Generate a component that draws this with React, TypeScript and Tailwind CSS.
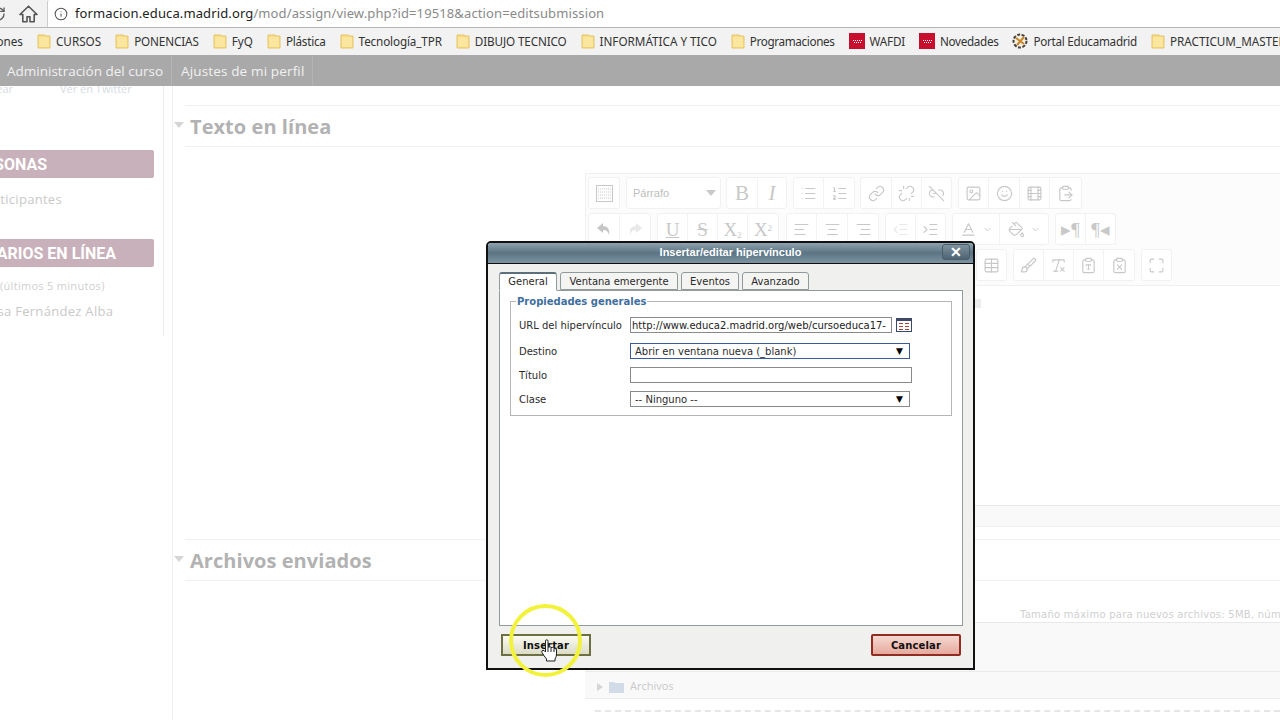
import React from 'react';
import {
  Info, RotateCw, List, ListOrdered, Link, Unlink, Link2Off, Image, Smile, Film, ClipboardPaste,
  AlignLeft, AlignCenter, AlignRight, Outdent, Indent, Baseline, PaintBucket,
  Table, Brush, RemoveFormatting, ClipboardType, ClipboardX, Maximize, ChevronDown,
} from 'lucide-react';

const FolderIcon = () => (
  <svg width="14" height="15" viewBox="0 0 14 15" className="shrink-0">
    <path d="M1 1h7l1 1h4v12H1z" fill="#f9dc82" stroke="#e5c468" strokeWidth="1" />
    <path d="M2 3h10v10H2z" fill="#fbe69f" />
  </svg>
);

const MadridIcon = () => (
  <svg width="16" height="16" viewBox="0 0 16 16" className="shrink-0">
    <rect width="16" height="16" fill="#c8102e" />
    <path d="M4 7h1v1H4zM6 7h1v1H6zM8 7h1v1H8zM10 7h1v1h-1zM12 7h1v1h-1zM5 9h1v1H5zM7 9h1v1H7zM9 9h1v1H9zM11 9h1v1h-1z" fill="#fff" />
  </svg>
);

const PortalIcon = () => (
  <svg width="16" height="16" viewBox="0 0 16 16" className="shrink-0">
    <circle cx="8" cy="8" r="6.5" fill="#f4f0e6" stroke="#4a4038" strokeWidth="2" strokeDasharray="3 1.5" />
    <path d="M4 5l8 6M12 4l-7 8" stroke="#c9862a" strokeWidth="2" />
  </svg>
);

const HomeIcon = () => (
  <svg width="19" height="18" viewBox="0 0 19 18" className="ml-[13px] shrink-0">
    <path d="M9.5 1.2L1 9.5h2.8v7.3h4.2v-5h3v5h4.2V9.5H18z" fill="none" stroke="#555" strokeWidth="1.6" strokeLinejoin="round" />
  </svg>
);

const bookmarks: { label: string; icon: 'folder' | 'madrid' | 'portal'; fit?: string }[] = [
  { label: 'CURSOS', icon: 'folder' },
  { label: 'PONENCIAS', icon: 'folder', fit: 'tracking-[-0.12px]' },
  { label: 'FyQ', icon: 'folder' },
  { label: 'Plástica', icon: 'folder', fit: 'tracking-[-0.25px]' },
  { label: 'Tecnología_TPR', icon: 'folder', fit: 'tracking-[-0.13px]' },
  { label: 'DIBUJO TECNICO', icon: 'folder', fit: 'tracking-[-0.13px]' },
  { label: 'INFORMÁTICA Y TICO', icon: 'folder' },
  { label: 'Programaciones', icon: 'folder', fit: 'tracking-[-0.35px]' },
  { label: 'WAFDI', icon: 'madrid', fit: 'tracking-[-0.2px]' },
  { label: 'Novedades', icon: 'madrid', fit: 'tracking-[-0.33px]' },
  { label: 'Portal Educamadrid', icon: 'portal', fit: 'tracking-[-0.28px]' },
  { label: 'PRACTICUM_MASTER', icon: 'folder' },
];

const Btn = ({ children, w = 'w-[30px]' }: { children: React.ReactNode; w?: string }) => (
  <div className={`${w} h-[30px] flex items-center justify-center text-[#c8c8c8] border-r border-[#f3f3f3] last:border-r-0 shrink-0`}>
    {children}
  </div>
);

const Group = ({ children, className = '' }: { children: React.ReactNode; className?: string }) => (
  <div className={`flex rounded-[3px] border border-[#f1f1f1] bg-white ${className}`}>{children}</div>
);

const ic = { size: 17, strokeWidth: 1.6 };
const serif = "font-['Liberation_Serif',serif] text-[21px] leading-none text-[#c8c8c8]";
const small = "font-['Liberation_Serif',serif] text-[19px] leading-none text-[#c8c8c8]";

const KeyboardGrid = () => (
  <svg width="17" height="17" viewBox="0 0 17 17">
    <rect x="0.5" y="0.5" width="16" height="16" fill="none" stroke="#c8c8c8" />
    <path d="M2 4h13M2 7h13M2 10h13M2 13h13" stroke="#c8c8c8" strokeDasharray="1 1" />
  </svg>
);

const UndoSolid = ({ flip }: { flip?: boolean }) => (
  <svg width="16" height="16" viewBox="0 0 16 16" className={flip ? '-scale-x-100 opacity-40' : ''}>
    <path d="M7 2L1 7l6 5V9c3 0 5 1 6 5 1-5-1-9-6-9z" fill="#c6c6c6" />
  </svg>
);

const Toolbar = () => (
  <div className="flex flex-col gap-[4px] pt-[3px] pl-[2px] pb-[4px] bg-[#fcfcfc] border-b border-[#f0f0f0]">
    <div className="flex">
      <Group><Btn><KeyboardGrid /></Btn></Group>
      <Group className="ml-[6px] w-[95px] items-center justify-between pl-[6px] pr-[4px] text-[11px] text-[#bdbdbd] font-['Liberation_Sans',sans-serif]">
        <span>Párrafo</span>
        <span className="w-0 h-0 border-x-[5px] border-x-transparent border-t-[6px] border-t-[#c9c9c9]" />
      </Group>
      <Group className="ml-[5px]">
        <Btn w="w-[31px]"><span className={serif}>B</span></Btn>
        <Btn w="w-[28px]"><span className={`${serif} italic`}>I</span></Btn>
      </Group>
      <Group className="ml-[6px]">
        <Btn><List {...ic} /></Btn>
        <Btn><ListOrdered {...ic} /></Btn>
      </Group>
      <Group className="ml-[5px]">
        <Btn w="w-[31px]"><Link {...ic} /></Btn>
        <Btn><Unlink {...ic} /></Btn>
        <Btn w="w-[29px]"><Link2Off {...ic} /></Btn>
      </Group>
      <Group className="ml-[6px]">
        <Btn><Image {...ic} /></Btn>
        <Btn w="w-[31px]"><Smile {...ic} /></Btn>
        <Btn><Film {...ic} /></Btn>
        <Btn w="w-[31px]"><ClipboardPaste {...ic} /></Btn>
      </Group>
    </div>
    <div className="flex">
      <Group>
        <Btn w="w-[31px]"><UndoSolid /></Btn>
        <Btn><UndoSolid flip /></Btn>
      </Group>
      <Group className="ml-[6px]">
        <Btn><span className={`${small} underline`}>U</span></Btn>
        <Btn><span className={`${small} line-through`}>S</span></Btn>
        <Btn><span className={small}>X<sub className="text-[9px]">2</sub></span></Btn>
        <Btn><span className={small}>X<sup className="text-[9px]">2</sup></span></Btn>
      </Group>
      <Group className="ml-[7px]">
        <Btn><AlignLeft {...ic} /></Btn>
        <Btn w="w-[31px]"><AlignCenter {...ic} /></Btn>
        <Btn><AlignRight {...ic} /></Btn>
      </Group>
      <Group className="ml-[6px]">
        <Btn><Outdent {...ic} className="opacity-40" /></Btn>
        <Btn w="w-[29px]"><Indent {...ic} /></Btn>
      </Group>
      <Group className="ml-[6px]">
        <Btn w="w-[47px]"><Baseline {...ic} /><ChevronDown size={11} className="ml-[5px]" /></Btn>
        <Btn w="w-[48px]"><PaintBucket {...ic} /><ChevronDown size={11} className="ml-[5px]" /></Btn>
      </Group>
      <Group className="ml-[6px]">
        <Btn><span className={small}>▸¶</span></Btn>
        <Btn w="w-[29px]"><span className={small}>¶◂</span></Btn>
      </Group>
    </div>
    <div className="flex pl-[388px]">
      <Group><Btn w="w-[29px]"><Table {...ic} /></Btn></Group>
      <Group className="ml-[6px]">
        <Btn><Brush {...ic} /></Btn>
        <Btn><RemoveFormatting {...ic} /></Btn>
        <Btn><ClipboardType {...ic} /></Btn>
        <Btn><ClipboardX {...ic} /></Btn>
      </Group>
      <Group className="ml-[6px]"><Btn w="w-[29px]"><Maximize {...ic} /></Btn></Group>
    </div>
  </div>
);

const SectionHead = ({ title, className = '' }: { title: string; className?: string }) => (
  <div className={`relative ml-[12px] h-[42px] pt-[2px] border-y border-[#f1f1f1] flex items-center pl-[5px] ${className}`}>
    <span className="absolute -left-[11px] top-[16px] w-0 h-0 border-x-[5px] border-x-transparent border-t-[6px] border-t-[#d5d5d5]" />
    <span className="font-['Open_Sans',sans-serif] font-bold text-[20px] tracking-[0.05px] text-[#b2b2b2]">{title}</span>
  </div>
);

const Sidebar = () => (
  <aside className="w-[164px] h-[250px] shrink-0 border-r border-[#ececec] overflow-hidden text-[#cfcfcf] font-['Open_Sans',sans-serif]">
    <div className="flex h-[10px] -mt-[2px] text-[11px] leading-[10px] text-[#d5dce4]">
      <span className="-ml-[29px] w-[89px]">Twittear</span>
      <span>Ver en Twitter</span>
    </div>
    <div className="mt-[56px] w-[154px] h-[28px] pt-px bg-[#c8b1bb] rounded-r-[2px] overflow-hidden flex items-center justify-end pr-[107px]">
      <span className="font-['Roboto',sans-serif] font-bold text-[16px] text-white whitespace-nowrap">PERSONAS</span>
    </div>
    <div className="mt-[12px] -ml-[21px] text-[13px] tracking-[0.3px] leading-[18px] text-[#c9c9c9] whitespace-nowrap">Participantes</div>
    <div className="mt-[31px] w-[154px] h-[28px] pt-px bg-[#c8b1bb] rounded-r-[2px] overflow-hidden flex items-center justify-end pr-[38px]">
      <span className="font-['Roboto',sans-serif] font-bold text-[16px] text-white whitespace-nowrap">USUARIOS EN LÍNEA</span>
    </div>
    <div className="mt-[11px] text-[11px] tracking-[0.3px] leading-[15px] text-[#cfcfcf] whitespace-nowrap">(últimos 5 minutos)</div>
    <div className="mt-[9px] -ml-[19px] text-[13px] tracking-[0.3px] leading-[18px] text-[#c9c9c9] whitespace-nowrap">Rosa Fernández Alba</div>
  </aside>
);

const MainColumn = () => (
  <main className="flex-1 min-w-0 ml-[8px] border-l border-[#efefef] pt-[19px]">
    <SectionHead title="Texto en línea" />
    <div className="ml-[412px] mt-[26px] border border-[#f0f0f0] border-r-0 h-[354px] flex flex-col">
      <Toolbar />
      <div className="flex-1 pt-[13px] pl-[389px]">
        <span className="block w-[6px] h-[9px] bg-[#ececec]" />
      </div>
      <div className="h-[21px] bg-[#f9f9f9] border-t border-[#e8e8e8]" />
    </div>
    <SectionHead title="Archivos enviados" className="mt-[12px]" />
    <div className="ml-[412px] h-[41px] flex items-end justify-start overflow-hidden">
      <span className="whitespace-nowrap pl-[435px] text-[10px] tracking-[0.25px] leading-[14px] text-[#cfcfcf] font-['DejaVu_Sans',sans-serif]">
        Tamaño máximo para nuevos archivos: 5MB, número máximo de archivos: 20
      </span>
    </div>
    <div className="ml-[412px] h-[49px] bg-[#f9f9f9] border-t border-[#e8e8e8]" />
    <div className="ml-[412px] h-[28px] pt-[3px] bg-[#f9f9f9] border-y border-[#ececec] flex items-center pl-[12px] gap-[6px] text-[11px] text-[#c9c9c9] font-['Open_Sans',sans-serif]">
      <span className="w-0 h-0 border-y-[4px] border-y-transparent border-l-[6px] border-l-[#d5d5d5]" />
      <svg width="15" height="12" viewBox="0 0 15 12"><path d="M0 1h5l1 1h9v10H0z" fill="#d3dbe8" /></svg>
      <span>Archivos</span>
    </div>
    <div className="ml-[422px] mt-[11px] border-t-2 border-dashed border-[#e6e6e6]" />
  </main>
);

const Tab = ({ label, w, active }: { label: string; w: string; active?: boolean }) => (
  <div className={`${w} flex items-center justify-center rounded-t-[3px] border border-[#919b9c] ${active ? 'bg-white border-b-white border-t-[#5c6f7c] border-t-2 h-[19px] pb-px -mb-px z-10' : 'h-[18px] bg-[#f4f4f2]'}`}>
    {label}
  </div>
);

const Arrow = () => <span className="absolute right-[6px] top-[2px] text-[9px] leading-[10px] text-black">▼</span>;

const LinkDialog = () => (
  <div className="absolute left-[486px] top-[241px] w-[489px] h-[429px] border-2 border-[#111] rounded-t-[5px] bg-[#f0f0ee] flex flex-col font-['DejaVu_Sans',sans-serif] text-[10px] text-[#2b2b2b]">
    <div className="relative h-[21px] pb-[2px] shrink-0 rounded-t-[3px] bg-gradient-to-b from-[#8fa2ae] via-[#5b7484] to-[#7d93a1] border-b border-[#111] flex items-center justify-center text-white font-bold font-['Liberation_Sans',sans-serif] text-[11px]">
      Insertar/editar hipervínculo
      <span className="absolute right-[3px] top-[1px] w-[28px] h-[16px] rounded-[3px] border border-[#4b5d68] bg-gradient-to-b from-[#7f929e] to-[#4d6473] flex items-center justify-center text-white font-bold text-[14px] leading-none">✕</span>
    </div>
    <div className="flex-1 flex flex-col pl-[11px] pr-[11px] pt-[8px]">
      <div className="flex gap-[3px] pl-0 items-end">
        <Tab label="General" w="w-[58px]" active />
        <Tab label="Ventana emergente" w="w-[118px]" />
        <Tab label="Eventos" w="w-[58px]" />
        <Tab label="Avanzado" w="w-[67px]" />
      </div>
      <div className="w-[464px] h-[336px] bg-white border border-[#919b9c] px-[10px] pt-[4px]">
        <fieldset className="h-[121px] border border-[#b5b5b5] pl-[8px] pr-0">
          <legend className="font-bold text-[#3f6f9f] px-px ml-[-3px] leading-[13px]">Propiedades generales</legend>
          <div className="grid grid-cols-[111px_1fr] items-center h-[16px] mt-[9px]">
            <span>URL del hipervínculo</span>
            <div className="flex items-center gap-[4px]">
              <div className="w-[262px] h-[16px] border border-[#8a8a8a] pl-[1px] leading-[15px] overflow-hidden whitespace-nowrap text-[#222]">http://www.educa2.madrid.org/web/cursoeduca17-</div>
              <svg width="16" height="14" viewBox="0 0 16 14">
                <rect x="0.5" y="0.5" width="15" height="13" fill="#fff" stroke="#3a4a68" />
                <rect x="0" y="0" width="16" height="3" fill="#3a4a68" />
                <path d="M3 5h4v1H3zM9 5h4v1H9zM3 8h4v1H3zM9 8h4v1H9zM3 11h4v1H3zM9 11h4v1H9z" fill="#a8423a" />
              </svg>
            </div>
          </div>
          <div className="grid grid-cols-[111px_1fr] items-center h-[16px] mt-[10px]">
            <span>Destino</span>
            <div className="relative w-[280px] h-[16px] border border-[#3b5a9b] pl-[4px] leading-[15px]">Abrir en ventana nueva (_blank)<Arrow /></div>
          </div>
          <div className="grid grid-cols-[111px_1fr] items-center h-[16px] mt-[8px]">
            <span>Título</span>
            <div className="w-[282px] h-[16px] border border-[#8a8a8a] bg-white" />
          </div>
          <div className="grid grid-cols-[111px_1fr] items-center h-[16px] mt-[8px]">
            <span>Clase</span>
            <div className="relative w-[280px] h-[16px] border border-[#8a8a8a] pl-[4px] leading-[15px]">-- Ninguno --<Arrow /></div>
          </div>
        </fieldset>
      </div>
      <div className="flex justify-between pl-[2px] pr-[1px] mt-[8px] font-bold text-[10px] tracking-[0.15px] text-[#111]">
        <div className="w-[90px] h-[22px] border-2 border-[#6d7040] bg-gradient-to-b from-[#fafaf2] to-[#dcdcc8] flex items-center justify-center">Insertar</div>
        <div className="w-[90px] h-[22px] border-2 border-[#8f2d22] rounded-[2px] bg-gradient-to-b from-[#f4d8d0] to-[#e6a99e] flex items-center justify-center">Cancelar</div>
      </div>
    </div>
  </div>
);

const HandCursor = () => (
  <svg width="17" height="24" viewBox="0 0 17 24" className="absolute left-[541px] top-[639px]">
    <path
      d="M4.5 2Q4.5.8 5.7.8T7 2v6h1.5q1-.4 1.5.5h1.5q1-.3 1.5.7l.8.3q1.7 0 1.7 1.5v4q0 3-1.5 5v2H5.5v-2Q3 17 1 13.5q-.8-2 1-2.2 1.2 0 2.5 1.7z"
      fill="#fff"
      stroke="#222"
      strokeWidth="1"
    />
    <path d="M7 8v5M10 8.5V13M13 9.2V13" stroke="#222" strokeWidth="1" fill="none" />
  </svg>
);

export default function App() {
  return (
    <div className="relative w-[1280px] h-[720px] overflow-hidden bg-white">
      {/* browser chrome */}
      <div className="h-[27px] bg-[#f2f2f2] flex items-center">
        <RotateCw size={16} strokeWidth={2} className="-ml-[10px] text-[#5a5a5a] shrink-0" />
        <HomeIcon />
        <div className="ml-[9px] flex-1 h-[27px] bg-white flex items-center pl-[6px] rounded-tl-[2px] border-l border-[#ccc]">
          <Info size={14} strokeWidth={1.8} className="text-[#555] shrink-0" />
          <span className="ml-[7px] font-['Noto_Sans',sans-serif] text-[13px] tracking-[0.12px] text-[#8a8a8a] whitespace-nowrap">
            <span className="text-[#222]">formacion.educa.madrid.org</span>/mod/assign/view.php?id=19518&action=editsubmission
          </span>
        </div>
      </div>
      <div className="h-[28px] bg-[#f2f2f2] border-t border-[#b5b5b5] flex items-center gap-[14px] whitespace-nowrap font-['Noto_Sans',sans-serif] text-[11.7px] text-[#333]">
        <span className="-ml-[45px]">Aplicaciones</span>
        {bookmarks.map((b) => (
          <div key={b.label} className="flex items-center gap-[5px]">
            {b.icon === 'folder' && <FolderIcon />}
            {b.icon === 'madrid' && <MadridIcon />}
            {b.icon === 'portal' && <PortalIcon />}
            <span className={b.fit}>{b.label}</span>
          </div>
        ))}
      </div>
      {/* site nav */}
      <nav className="h-[31px] pt-px bg-[#a9a9a9] flex items-center font-['Open_Sans',sans-serif] text-[13.5px] text-[#f1f1f1]">
        <span className="pl-[7px] pr-[8px] h-full flex items-center border-r border-[#b4b4b4]">Administración del curso</span>
        <span className="pl-[9px] pr-[8px] h-full flex items-center border-r border-[#b4b4b4] tracking-[0.15px]">Ajustes de mi perfil</span>
      </nav>
      <div className="flex h-[634px]">
        <Sidebar />
        <MainColumn />
      </div>
      <LinkDialog />
      {/* click highlight + cursor */}
      <div className="absolute left-[509px] top-[604px] w-[73px] h-[73px] rounded-full border-[4px] border-[#f2f23c]" />
      <HandCursor />
    </div>
  );
}
